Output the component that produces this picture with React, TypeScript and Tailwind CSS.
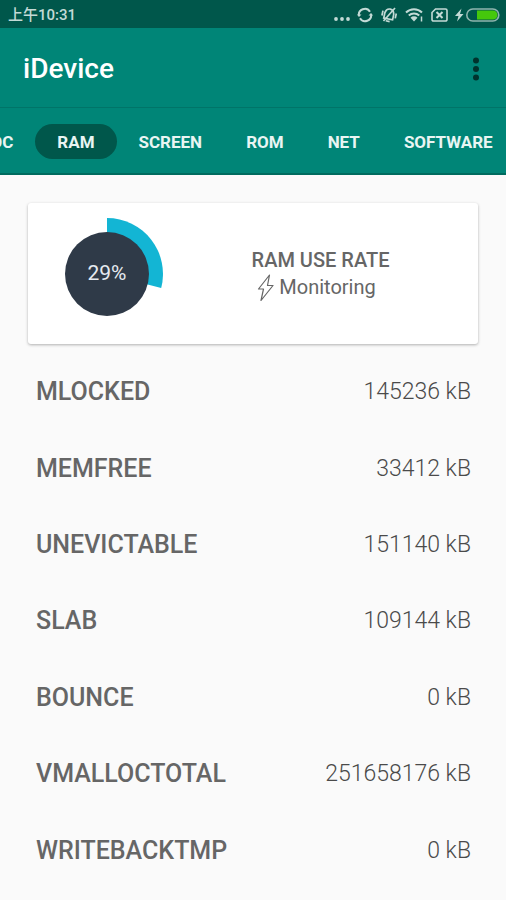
import clsx from "clsx";

const tabs = ["SOC", "RAM", "SCREEN", "ROM", "NET", "SOFTWARE"];

const memory = [
  { name: "MLOCKED", value: "145236 kB" },
  { name: "MEMFREE", value: "33412 kB" },
  { name: "UNEVICTABLE", value: "151140 kB" },
  { name: "SLAB", value: "109144 kB" },
  { name: "BOUNCE", value: "0 kB" },
  { name: "VMALLOCTOTAL", value: "251658176 kB" },
  { name: "WRITEBACKTMP", value: "0 kB" },
];

const StatusBar = () => (
  <div className="flex h-7 items-center justify-between bg-[#00574b] pl-2 pr-1.5 pt-0.5 text-[#c3dad6]">
    <span className="text-[15px] font-medium leading-5">上午10:31</span>
    <div className="flex items-center gap-[7px]">
      <svg width="16" height="16" viewBox="0 0 16 16" fill="currentColor">
        <circle cx="2" cy="12" r="1.900" />
        <circle cx="8" cy="12" r="1.900" />
        <circle cx="14" cy="12" r="1.900" />
      </svg>
      {/* sync */}
      <svg width="16" height="16" viewBox="0 0 16 16" fill="none" stroke="currentColor" strokeWidth="2">
        <path d="M2 9A6 6 0 0 1 13 4.700M14 7A6 6 0 0 1 3 11.300" />
        <path d="M0 7.500l2 2.500 2.500-2.500zM11.500 8.500l2.500-2.500 2 2.500z" fill="currentColor" stroke="none" />
      </svg>
      {/* muted */}
      <svg width="18" height="16" viewBox="0 0 18 16" fill="none" stroke="currentColor" strokeWidth="1.700">
        <g transform="rotate(12 9 8)">
          <path d="M4.500 12V6.500C5 3.500 6.500 2 9 2s4 1.500 4.500 4.500V12zM7 14.300h4M2.200 5v5M15.800 5v5" />
        </g>
        <path d="M15 1L3.500 14" />
      </svg>
      {/* wifi */}
      <svg width="19" height="16" viewBox="0 0 19 16" fill="none" stroke="currentColor" strokeWidth="2">
        <path d="M1 5.500a11.500 11.500 0 0 1 16 0M3.800 8.500a7.500 7.500 0 0 1 10.400 0" />
        <path d="M9 14.500L5.500 10.800a5 5 0 0 1 7 0z" fill="currentColor" stroke="none" />
        <path d="M16.500 9.500v5" strokeWidth="1.500" />
      </svg>
      {/* no sim */}
      <svg width="17" height="16" viewBox="0 0 17 16" fill="none" stroke="currentColor" strokeWidth="1.600">
        <path d="M4.500 2h10A1.500 1.500 0 0 1 16 3.500v9a1.500 1.500 0 0 1-1.500 1.500h-12A1.500 1.500 0 0 1 1 12.500V5.500z" />
        <path d="M5.500 5l6 6M11.500 5l-6 6" strokeWidth="2" />
      </svg>
      {/* charging battery */}
      <svg width="45" height="16" viewBox="0 0 45 16">
        <path d="M6.500 1.500L0 9h3.500L2 14.500 8.500 7H5z" fill="currentColor" />
        <rect x="11.800" y="2" width="32" height="12" rx="6" fill="none" stroke="#8fb5ae" strokeWidth="1.600" />
        <path d="M22 3.500h16a4.500 4.500 0 0 1 0 9H22z" fill="#45c80c" />
      </svg>
    </div>
  </div>
);

const AppBar = () => (
  <header className="flex h-20 items-center justify-between border-b border-[#007468] pl-[23px] pr-5 pt-0.5">
    <h1 className="text-[28px] font-medium leading-8 text-white">iDevice</h1>
    <button aria-label="More options" className="flex h-10 w-5 items-center justify-center">
      <svg width="8" height="24" viewBox="0 0 8 24" fill="#00332d">
        <circle cx="4" cy="3.500" r="3" />
        <circle cx="4" cy="12" r="3" />
        <circle cx="4" cy="20.500" r="3" />
      </svg>
    </button>
  </header>
);

const TabBar = () => (
  <nav className="flex h-[67px] items-center overflow-hidden border-b-2 border-[#006b5f] pt-0.5">
    {tabs.map((tab, i) => (
      <button
        key={tab}
        className={clsx(
          "h-[35px] shrink-0 rounded-full px-[22px] text-[17px] font-bold leading-5 text-[#e9f5f3]",
          i === 0 && "-ml-[42px]",
          tab === "RAM" && "bg-[#00574b]"
        )}
      >
        {tab}
      </button>
    ))}
  </nav>
);

const UsageChart = () => (
  <div className="relative size-28">
    <svg width="112" height="112" viewBox="0 0 112 112">
      <path d="M56 56V0A56 56 0 0 1 110.200 70z" fill="#13b5d4" />
      <circle cx="56" cy="56" r="42" fill="#2f3a48" />
    </svg>
    <span className="absolute inset-0 flex items-center justify-center text-[21px] text-[#e6eaf0]">
      29%
    </span>
  </div>
);

const UsageCard = () => (
  <section className="mx-7 mt-7 flex h-[141px] items-center rounded-[3px] bg-white pl-[23px] shadow-[0_1px_3px_rgba(0,0,0,0.3)]">
    <UsageChart />
    <div className="flex flex-1 flex-col items-center text-[20px] leading-[27px] text-[#666]">
      <h2 className="font-medium">RAM USE RATE</h2>
      <p className="flex items-center gap-1 pr-2">
        <svg width="18" height="27" viewBox="0 0 18 27" fill="none" stroke="currentColor" strokeWidth="1.200" strokeLinejoin="round">
          <path d="M12.500 1L1.500 15h5L4 26.500 16 11.500h-5.500z" />
        </svg>
        Monitoring
      </p>
    </div>
  </section>
);

export default function App() {
  return (
    <div className="flex min-h-screen flex-col bg-[#fafafa] font-[Roboto,'Noto_Sans_CJK_SC',sans-serif]">
      <StatusBar />
      <div className="bg-[#008577]">
        <AppBar />
        <TabBar />
      </div>
      <main className="flex flex-1 flex-col pb-[11px]">
        <UsageCard />
        <dl className="mt-[10px] grid flex-1 auto-rows-fr pl-9 pr-[35px] text-[#666]">
          {memory.map((item) => (
            <div key={item.name} className="flex items-center justify-between">
              <dt className="text-[25px] font-medium leading-8">{item.name}</dt>
              <dd className="text-[23px] font-light leading-8 text-[#4a4a4a]">{item.value}</dd>
            </div>
          ))}
        </dl>
      </main>
    </div>
  );
}
